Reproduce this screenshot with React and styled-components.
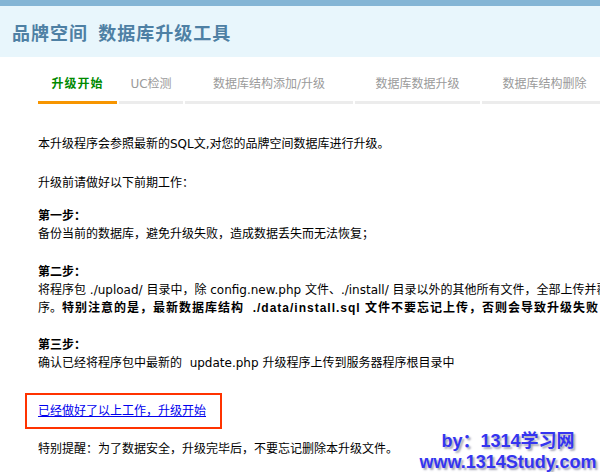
import styled, { createGlobalStyle } from 'styled-components';

const GlobalStyle = createGlobalStyle`
  body {
    margin: 0;
    background: #fff;
    overflow: hidden;
    font-family: "DejaVu Sans", "Noto Sans CJK SC", sans-serif;
    font-size: 12px;
    color: #000;
  }
`;

const tabs = [
  { label: '升级开始', width: 79, active: true },
  { label: 'UC检测', width: 64 },
  { label: '数据库结构添加/升级', width: 168 },
  { label: '数据库数据升级', width: 125 },
  { label: '数据库结构删除', width: 125 },
];

const App = () => {
  return (
    <>
      <GlobalStyle />
      <Page>
        <TopBar />
        <Header>
          <Title>品牌空间&nbsp; 数据库升级工具</Title>
        </Header>
        <TabRow>
          {tabs.map((tab) => (
            <Tab key={tab.label} $width={tab.width} $active={tab.active}>
              {tab.label}
            </Tab>
          ))}
        </TabRow>
        <Content>
          <Para $top={31}>本升级程序会参照最新的SQL文,对您的品牌空间数据库进行升级。</Para>
          <Para $top={21}>升级前请做好以下前期工作：</Para>
          <Para $top={15}>
            <Step>第一步：</Step>
            <br />
            备份当前的数据库，避免升级失败，造成数据丢失而无法恢复；
          </Para>
          <Para $top={20}>
            <Step>第二步：</Step>
            <br />
            将程序包 ./upload/ 目录中，除 config.new.php 文件、./install/
            目录以外的其他所有文件，全部上传并覆盖当前程
            <br />
            序。
            <Strong>
              特别注意的是，最新数据库结构&nbsp; ./data/install.sql
              文件不要忘记上传，否则会导致升级失败
            </Strong>
          </Para>
          <Para $top={19}>
            <Step>第三步：</Step>
            <br />
            确认已经将程序包中最新的&nbsp; update.php 升级程序上传到服务器程序根目录中
          </Para>
          <LinkBox>
            <StartLink href="#">已经做好了以上工作，升级开始</StartLink>
          </LinkBox>
          <Para $top={11}>特别提醒：为了数据安全，升级完毕后，不要忘记删除本升级文件。</Para>
        </Content>
        <Watermark>
          <div>by：1314学习网</div>
          <div>www.1314Study.com</div>
        </Watermark>
      </Page>
    </>
  );
};

export default App;

const Page = styled.div`
  position: relative;
  width: 640px;
  height: 472px;
  overflow: hidden;
`;

const TopBar = styled.div`
  height: 6px;
  background-color: #84b5d5;
`;

const Header = styled.div`
  height: 51px;
  padding-left: 12px;
  display: flex;
  align-items: center;
  background-color: #e8f6fc;
`;

const Title = styled.h1`
  margin: 0;
  font-size: 18px;
  font-weight: bold;
  line-height: 20px;
  letter-spacing: 1px;
  color: #4e80a4;
  font-family: "Noto Sans CJK SC", sans-serif;
`;

const TabRow = styled.div`
  display: flex;
  gap: 2px;
  padding: 20px 0 0 38px;
`;

const Tab = styled.div`
  flex: none;
  width: ${(p) => p.$width}px;
  padding-bottom: 10px;
  line-height: 14px;
  text-align: center;
  font-size: 12px;
  font-weight: ${(p) => (p.$active ? 'bold' : 'normal')};
  letter-spacing: ${(p) => (p.$active ? '1px' : '0')};
  color: ${(p) => (p.$active ? '#008a00' : '#9a9a9a')};
  border-bottom: 3px solid ${(p) => (p.$active ? '#f79500' : '#ececec')};
`;

const Content = styled.div`
  padding-left: 38px;
  white-space: nowrap;
`;

const Para = styled.p`
  margin: ${(p) => p.$top}px 0 0;
  line-height: 18px;
`;

const Step = styled.b`
  font-weight: bold;
`;

const Strong = styled.b`
  font-weight: bold;
  letter-spacing: 1px;
  font-family: "Liberation Sans", "Noto Sans CJK SC", sans-serif;
`;

const LinkBox = styled.div`
  display: inline-block;
  margin: 21px 0 0 -13px;
  padding: 7px 14px 7px 11px;
  line-height: 18px;
  border: 2px solid #ff3300;
`;

const StartLink = styled.a`
  color: #0000ee;
  text-decoration: underline;
`;

const Watermark = styled.div`
  position: absolute;
  left: 418px;
  top: 431px;
  width: 180px;
  text-align: center;
  font-family: "Liberation Sans", "Noto Sans CJK SC", sans-serif;
  font-size: 18px;
  font-weight: bold;
  line-height: 21px;
  color: #3535f0;
  text-shadow: 2px 2px 2px #a8a8b8;
`;
